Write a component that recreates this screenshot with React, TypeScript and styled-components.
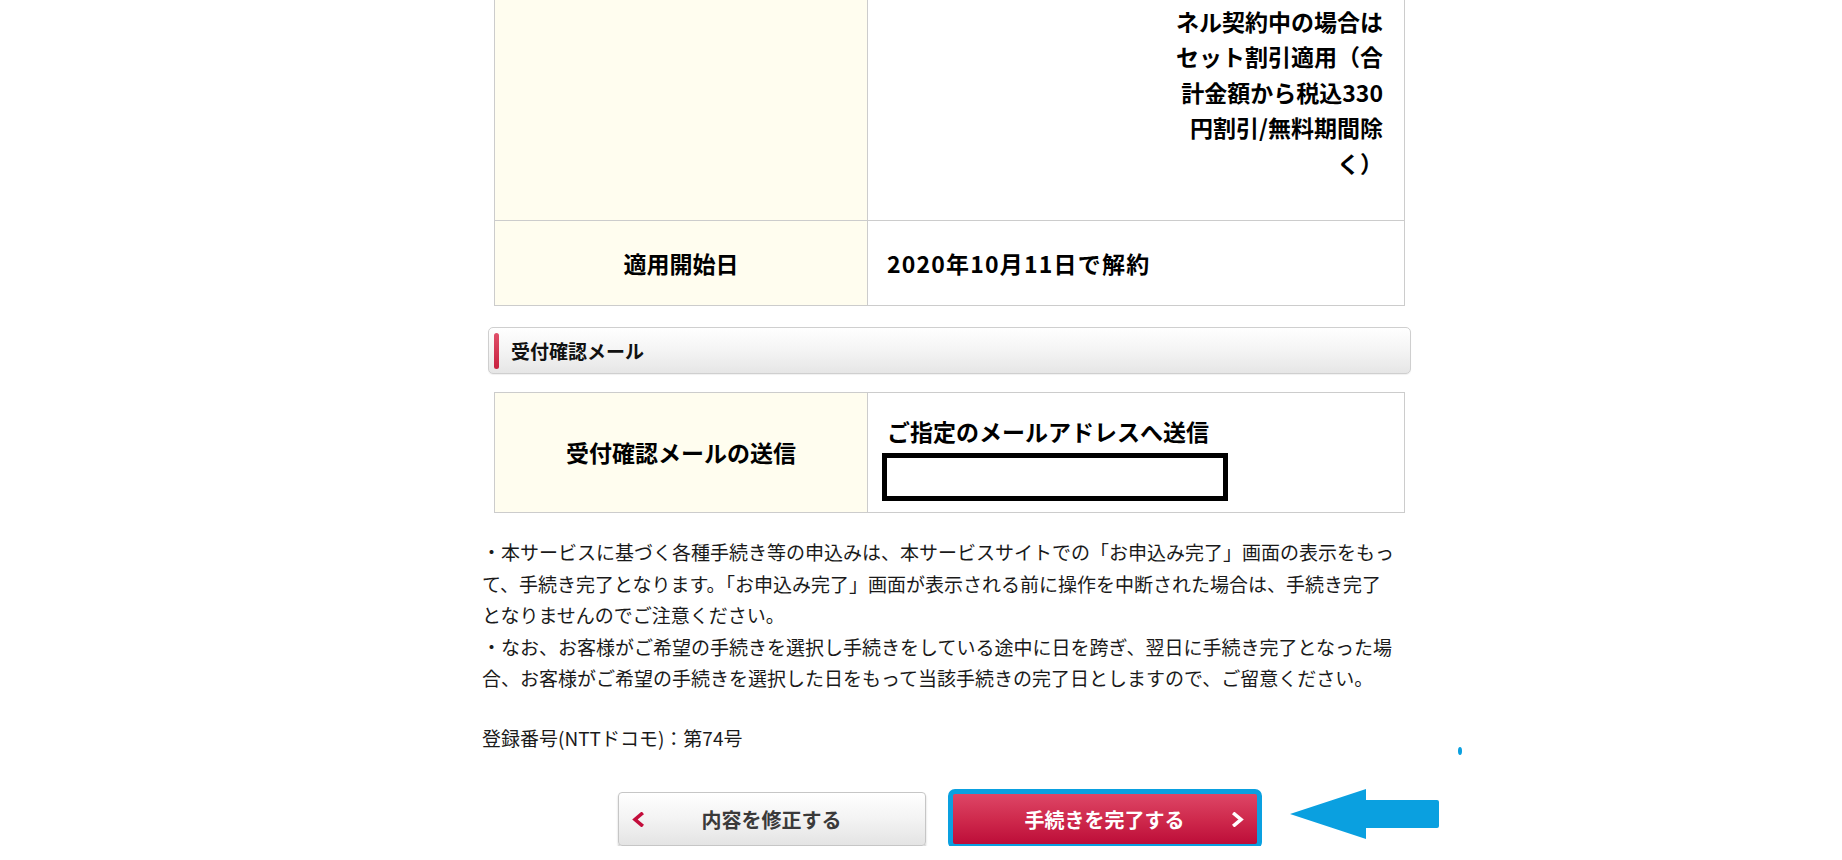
import React from 'react';
import styled, { createGlobalStyle } from 'styled-components';

const GlobalStyle = createGlobalStyle`
  html, body {
    margin: 0;
    padding: 0;
    background: #fff;
  }
  body {
    font-family: "Noto Sans CJK JP", "Noto Sans", sans-serif;
    color: #111;
    overflow: hidden;
  }
`;

const Page = styled.main`
  width: 930px;
  margin: -53px 0 0 482px;
`;

const InfoTable = styled.table`
  width: 911px;
  margin-left: 12px;
  border-collapse: collapse;
  table-layout: fixed;
`;

const LabelCell = styled.th`
  width: 372px;
  padding: 0;
  background: #fffdef;
  border: 1px solid #ccc;
  font-size: 23px;
  font-weight: 700;
  line-height: 35px;
  text-align: center;
  vertical-align: middle;
  color: #000;
`;

const ValueCell = styled.td<{ $pad?: string; $spacing?: number }>`
  padding: ${({ $pad }) => $pad ?? '25px 19px 24px'};
  border: 1px solid #ccc;
  font-size: 23px;
  font-weight: 700;
  line-height: 35px;
  letter-spacing: ${({ $spacing }) => $spacing ?? 0}px;
  vertical-align: middle;
  color: #000;
`;

const RightBlock = styled.div`
  text-align: right;
  line-height: 35.5px;
  padding: 20px 21px 39px 0;
`;

const Line = styled.span`
  display: block;
  white-space: nowrap;
`;

const MailBox = styled.div`
  width: 346px;
  height: 48px;
  margin: 4px 0 0 -5px;
  box-sizing: border-box;
  border: 5px solid #000;
  background: #fff;
`;

const SectionHeading = styled.h2`
  display: flex;
  align-items: center;
  gap: 12px;
  width: 923px;
  height: 47px;
  margin: 21px 0 18px 6px;
  padding-left: 5px;
  box-sizing: border-box;
  border: 1px solid #cfcfcf;
  border-radius: 5px;
  background: linear-gradient(to bottom, #ffffff 0%, #f4f4f4 50%, #e6e6e6 100%);
  box-shadow: 0 1px 1px rgba(0, 0, 0, 0.06);
  font-size: 19px;
  font-weight: 700;
  color: #111;
`;

const RedMark = styled.span`
  width: 5px;
  height: 36px;
  border-radius: 3px;
  background: linear-gradient(to bottom, #e0506a, #c8203f);
`;

const Notes = styled.div`
  margin-top: 23px;
  font-size: 19px;
  line-height: 31.5px;
  white-space: nowrap;
  color: #1a1a1a;
`;

const Registration = styled.p`
  margin: 28px 0 0;
  font-size: 19px;
  line-height: 31.5px;
  color: #1a1a1a;
`;

const ButtonRow = styled.div`
  position: relative;
  display: flex;
  justify-content: center;
  gap: 25px;
  width: 912px;
  margin-top: 39px;
`;

const ActionButton = styled.button<{ $primary?: boolean }>`
  display: grid;
  grid-template-columns: 44px 1fr 44px;
  align-items: center;
  width: 308px;
  height: 54px;
  padding: 0;
  box-sizing: border-box;
  border: 1px solid ${({ $primary }) => ($primary ? '#b0112f' : '#c6c6c6')};
  border-radius: 4px;
  background: ${({ $primary }) =>
    $primary
      ? 'linear-gradient(to bottom, #de4767 0%, #cf2a4d 50%, #bc0c38 100%)'
      : 'linear-gradient(to bottom, #ffffff 0%, #f3f3f3 50%, #e4e4e4 100%)'};
  box-shadow: 0 2px 2px rgba(0, 0, 0, 0.22);
  color: ${({ $primary }) => ($primary ? '#fff' : '#3a3a3a')};
  font-family: inherit;
  font-size: 20px;
  font-weight: 700;
  outline: ${({ $primary }) => ($primary ? '5px solid #0aa0e0' : 'none')};
  outline-offset: -2px;
  cursor: pointer;
`;

const ButtonLabel = styled.span`
  grid-column: 2;
  text-align: center;
  white-space: nowrap;
`;

const ChevronSlot = styled.span<{ $side: 'left' | 'right' }>`
  grid-column: ${({ $side }) => ($side === 'left' ? 1 : 3)};
  grid-row: 1;
  display: flex;
  justify-content: ${({ $side }) => ($side === 'left' ? 'flex-start' : 'flex-end')};
  padding: ${({ $side }) => ($side === 'left' ? '0 0 0 13px' : '0 14px 0 0')};
`;

const Arrow = styled.svg`
  position: absolute;
  left: 806px;
  top: -5px;
`;

const StrayDot = styled.span`
  position: absolute;
  left: 976px;
  top: -45px;
  width: 4px;
  height: 8px;
  border-radius: 50%;
  background: #0aa0e0;
`;

const Chevron: React.FC<{ dir: 'left' | 'right'; color: string }> = ({ dir, color }) => (
  <svg width="12" height="15" viewBox="0 0 12 15">
    <polyline
      points={dir === 'left' ? '9.5,2 3,7.5 9.5,13' : '2.5,2 9,7.5 2.5,13'}
      fill="none"
      stroke={color}
      strokeWidth="3.6"
      strokeLinecap="square"
      strokeLinejoin="miter"
    />
  </svg>
);

const App: React.FC = () => (
  <>
    <GlobalStyle />
    <Page>
      <InfoTable>
        <tbody>
          <tr>
            <LabelCell />
            <ValueCell $pad="0">
              <RightBlock>
                <Line>ひかり/ひかりチャン</Line>
                <Line>ネル契約中の場合は</Line>
                <Line>セット割引適用（合</Line>
                <Line>計金額から税込330</Line>
                <Line>円割引/無料期間除</Line>
                <Line>く）</Line>
              </RightBlock>
            </ValueCell>
          </tr>
          <tr>
            <LabelCell>適用開始日</LabelCell>
            <ValueCell $spacing={1.2}>2020年10月11日で解約</ValueCell>
          </tr>
        </tbody>
      </InfoTable>

      <SectionHeading>
        <RedMark />
        受付確認メール
      </SectionHeading>

      <InfoTable>
        <tbody>
          <tr>
            <LabelCell>受付確認メールの送信</LabelCell>
            <ValueCell $pad="21px 19px 11px">
              <Line>ご指定のメールアドレスへ送信</Line>
              <MailBox />
            </ValueCell>
          </tr>
        </tbody>
      </InfoTable>

      <Notes>
        ・本サービスに基づく各種手続き等の申込みは、本サービスサイトでの「お申込み完了」画面の表示をもっ
        <br />
        て、手続き完了となります。「お申込み完了」画面が表示される前に操作を中断された場合は、手続き完了
        <br />
        となりませんのでご注意ください。
        <br />
        ・なお、お客様がご希望の手続きを選択し手続きをしている途中に日を跨ぎ、翌日に手続き完了となった場
        <br />
        合、お客様がご希望の手続きを選択した日をもって当該手続きの完了日としますので、ご留意ください。
      </Notes>

      <Registration>登録番号(NTTドコモ)：第74号</Registration>

      <ButtonRow>
        <StrayDot />
        <ActionButton type="button">
          <ChevronSlot $side="left">
            <Chevron dir="left" color="#c30d3b" />
          </ChevronSlot>
          <ButtonLabel>内容を修正する</ButtonLabel>
        </ActionButton>
        <ActionButton type="button" $primary>
          <ButtonLabel>手続きを完了する</ButtonLabel>
          <ChevronSlot $side="right">
            <Chevron dir="right" color="#ffffff" />
          </ChevronSlot>
        </ActionButton>
        <Arrow width="154" height="56" viewBox="0 0 154 56">
          <path
            d="M2 27 L78 2 L78 13 L149 13 Q151 13 151 15 L151 39 Q151 41 149 41 L78 41 L78 52 Z"
            fill="#0aa0e0"
          />
        </Arrow>
      </ButtonRow>
    </Page>
  </>
);

export default App;
